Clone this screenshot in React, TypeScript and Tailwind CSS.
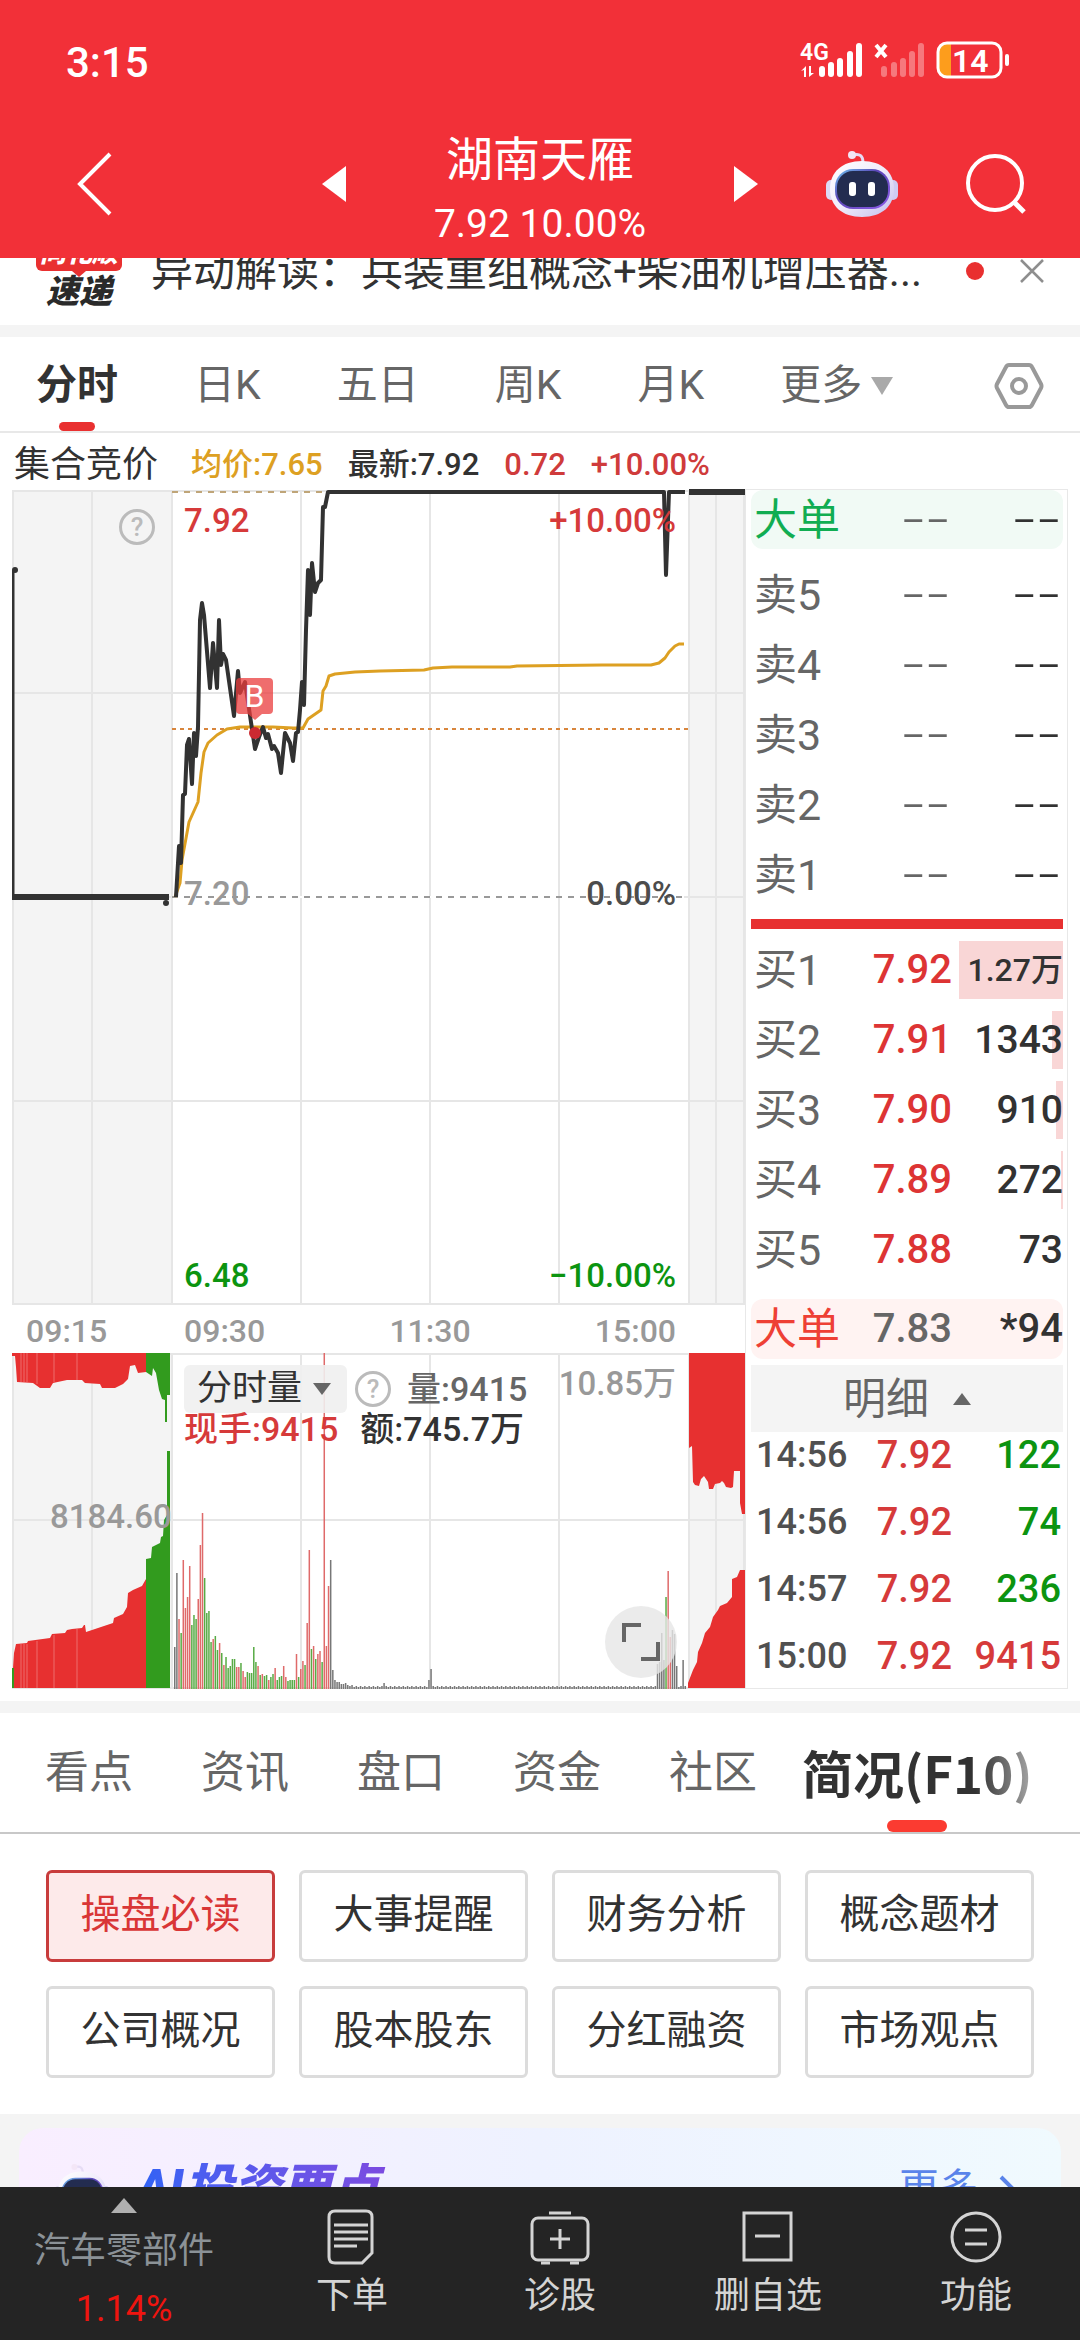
import { Fragment } from "react";

const minuteBars =
  "42k 116k 70r 56g 129r 81r 92r 123r 64g 74g 70g 90r 144r 176r 111g 76g 78g 47g 50r 53g 39g 46r 36g 24r 32g 21g 23g 30g 30g 22r 22r 26g 18r 12r 17g 16g 16g 42g 27g 23r 14g 15r 13g 14g 9r 12g 15g 21r 9g 12g 13g 23r 12r 8g 9g 9g 9g 35r 12g 20r 28r 24g 66r 139r 40g 43r 30g 35r 38r 27g 336r 43r 103r 129k 19k 9k 7k 7k 5k 5k 6k 4k 3k 4k".split(
    " "
  );

const lateBars: Record<number, string> = {
  98: "6k",
  119: "9k",
  120: "20k",
  226: "25k",
  227: "27k",
  228: "56k",
  229: "29k",
  230: "92g",
  231: "118r",
  232: "52r",
  233: "59k",
  234: "55k",
  235: "23k",
  238: "29k",
};

const barColors: Record<string, string> = {
  r: "#df6a6a",
  g: "#58ab45",
  k: "#777777",
};

const priceLine =
  "176,897 179,846 181,863 183,795 185,794 187,745 189,739 192,784 194,733 196,756 198,727 200,620 202,603 204,615 210,688 213,643 217,688 219,620 221,665 223,654 226,660 234,716 238,671 240,693 245,682 255,749 259,737 263,727 266,738 268,734 272,749 274,746 278,753 281,773 285,733 290,743 293,761 296,733 298,732 300,710 302,682 304,705 306,630 308,570 310,615 312,563 315,592 318,583 321,580 323,507 325,507 328,492 664,492 666,575 669,492 685,492";

const averageLine =
  "175,897 180,883 182,860 189,822 198,802 201,773 204,752 208,743 217,735 227,729 240,727 273,727 293,728 303,728 308,719 321,710 323,691 326,686 329,676 335,674 355,672 380,671 424,670 433,668 452,667 510,667 517,666 602,665 651,665 659,663 665,658 669,652 675,646 679,644 684,644";

const periods = ["日K", "五日", "周K", "月K"];
const sections = ["看点", "资讯", "盘口", "资金", "社区"];
const topics = [
  "操盘必读",
  "大事提醒",
  "财务分析",
  "概念题材",
  "公司概况",
  "股本股东",
  "分红融资",
  "市场观点",
];

const bids = [
  { label: "买1", price: "7.92", volume: "1.27万", depth: 94 },
  { label: "买2", price: "7.91", volume: "1343", depth: 10 },
  { label: "买3", price: "7.90", volume: "910", depth: 6 },
  { label: "买4", price: "7.89", volume: "272", depth: 2 },
  { label: "买5", price: "7.88", volume: "73", depth: 0 },
];

const ticks = [
  { time: "14:56", price: "7.92", volume: "122", up: false },
  { time: "14:56", price: "7.92", volume: "74", up: false },
  { time: "14:57", price: "7.92", volume: "236", up: false },
  { time: "15:00", price: "7.92", volume: "9415", up: true },
];

const Robot = ({ className }: { className: string }) => (
  <svg viewBox="0 0 72 66" className={className} aria-hidden="true">
    <defs>
      <linearGradient id="shell" x1="0" y1="0" x2="1" y2="1">
        <stop offset="0" stopColor="#ffffff" />
        <stop offset="0.5" stopColor="#f0ecfb" />
        <stop offset="1" stopColor="#c3bdec" />
      </linearGradient>
      <linearGradient id="rim" x1="0" y1="0" x2="1" y2="1">
        <stop offset="0" stopColor="#6fc8f2" />
        <stop offset="0.4" stopColor="#5b46b8" />
        <stop offset="1" stopColor="#8f5be8" />
      </linearGradient>
    </defs>
    <path d="M27 4c7-2 10 1 10 8" fill="none" stroke="#e6dcf5" strokeWidth="3" />
    <circle cx="26" cy="4" r="4" fill="#f3e6f6" />
    <rect x="0" y="29" width="10" height="20" rx="5" fill="#dcdaf5" />
    <rect x="62" y="29" width="10" height="20" rx="5" fill="#cfcbf2" />
    <path
      d="M36 10c20 0 32 11 32 28S56 66 36 66 4 55 4 38 16 10 36 10z"
      fill="url(#shell)"
    />
    <rect x="9" y="18" width="55" height="40" rx="18" fill="url(#rim)" />
    <rect x="11" y="20" width="51" height="36" rx="16" fill="#232c50" />
    <rect x="23" y="31" width="7" height="14" rx="3" fill="#fff" />
    <rect x="42" y="31" width="7" height="14" rx="3" fill="#fff" />
  </svg>
);

const StatusBar = () => (
  <div className="flex h-[120px] items-center justify-between pr-[70px] pl-[66px]">
    <span className="pt-1 text-[42px] font-medium">3:15</span>
    <svg
      viewBox="0 0 210 38"
      className="h-[38px] w-[210px] overflow-visible"
      role="img"
      aria-label="4G 14%"
    >
      <g fill="#fff">
        <text x="0" y="19" fontSize="23" fontWeight="600" fontFamily="Roboto">
          4G
        </text>
        <path d="M1 30l5-5v11H4v-7zM9 25v11l5-4h-3v-7z" />
        <rect x="19" y="25" width="6" height="11" rx="3" />
        <rect x="28" y="21" width="6" height="15" rx="3" />
        <rect x="37" y="17" width="6" height="19" rx="3" />
        <rect x="47" y="10" width="6" height="26" rx="3" />
        <rect x="56" y="2" width="6" height="34" rx="3" />
      </g>
      <path d="M76 4l10 12M86 4L76 16" stroke="#fff" strokeWidth="4" />
      <g fill="#fff" opacity="0.35">
        <rect x="81" y="25" width="6" height="11" rx="3" />
        <rect x="91" y="21" width="6" height="15" rx="3" />
        <rect x="100" y="17" width="6" height="19" rx="3" />
        <rect x="109" y="10" width="6" height="26" rx="3" />
        <rect x="118" y="2" width="6" height="34" rx="3" />
      </g>
      <path d="M151 3v32h-5q-7-1-7-8V11q0-7 7-8z" fill="#fd9d1c" />
      <rect x="138" y="2" width="63" height="34" rx="9" fill="none" stroke="#fff" strokeWidth="3" />
      <rect x="205" y="13" width="4" height="12" rx="2" fill="#fff" />
      <text x="152" y="31" fontSize="32" fontWeight="600" fontFamily="Roboto" fill="#fff">
        14
      </text>
    </svg>
  </div>
);

const Header = () => (
  <header className="shrink-0 bg-[#f23038] text-white">
    <StatusBar />
    <div className="grid h-[138px] grid-cols-[1fr_auto_1fr] items-center pb-[10px]">
      <button type="button" aria-label="返回" className="ml-[76px] w-9">
        <svg viewBox="0 0 36 64" className="h-16 w-9">
          <path d="M34 2L4 32l30 30" fill="none" stroke="#fff" strokeWidth="4" />
        </svg>
      </button>
      <div className="flex w-[436px] items-center justify-between">
        <button type="button" aria-label="上一只">
          <svg viewBox="0 0 24 36" className="h-9 w-6">
            <path d="M24 0v36L0 18z" fill="#fff" />
          </svg>
        </button>
        <div className="pt-4 text-center">
          <h1 className="text-[47px] leading-[48px]">湖南天雁</h1>
          <p className="mt-4 text-[39px] leading-[48px]">7.92 10.00%</p>
        </div>
        <button type="button" aria-label="下一只">
          <svg viewBox="0 0 24 36" className="h-9 w-6">
            <path d="M0 0v36l24-18z" fill="#fff" />
          </svg>
        </button>
      </div>
      <div className="flex items-center justify-end gap-[68px] pr-[54px]">
        <button type="button" aria-label="助手">
          <Robot className="h-[66px] w-[72px]" />
        </button>
        <button type="button" aria-label="搜索">
          <svg viewBox="0 0 60 60" className="h-[60px] w-[60px]">
            <circle cx="29" cy="29" r="27" fill="none" stroke="#fff" strokeWidth="4" />
            <path d="M48 48l10 10" stroke="#fff" strokeWidth="5" />
          </svg>
        </button>
      </div>
    </div>
  </header>
);

const NewsStrip = () => (
  <div className="h-[67px] shrink-0 overflow-hidden bg-white">
    <div className="-mt-[23px] flex h-[72px] items-center px-[36px]">
      <div className="flex w-[86px] flex-col items-center italic">
        <span className="h-[36px] w-full rounded-md bg-[#e93030] text-center text-[26px] leading-[36px] font-black text-white">
          同花顺
        </span>
        <svg viewBox="0 0 14 6" className="h-[6px] w-[14px]">
          <path d="M0 0h14L7 6z" fill="#e93030" />
        </svg>
        <span className="text-[33px] leading-[30px] font-black text-[#2a2a2a]">速递</span>
      </div>
      <p className="ml-[29px] flex-1 text-[42px] whitespace-nowrap text-[#323232]">
        异动解读：兵装重组概念+柴油机增压器...
      </p>
      <span className="h-[18px] w-[18px] rounded-full bg-[#e93030]" />
      <button type="button" aria-label="关闭" className="ml-[36px]">
        <svg viewBox="0 0 24 24" className="h-6 w-6">
          <path d="M1 1l22 22M23 1L1 23" stroke="#8e8e8e" strokeWidth="2.5" />
        </svg>
      </button>
    </div>
  </div>
);

const PeriodTabs = () => (
  <nav className="flex h-24 shrink-0 items-center gap-[76px] border-b-2 border-[#e8e8e8] bg-white px-[36px] pt-1 text-[41px] whitespace-nowrap text-[#666]">
    <button type="button" className="relative h-full font-bold text-[#323232]">
      分时
      <span className="absolute bottom-0 left-1/2 h-[9px] w-9 -translate-x-1/2 rounded-full bg-[#e93030]" />
    </button>
    {periods.map((period) => (
      <button key={period} type="button">
        {period}
      </button>
    ))}
    <button type="button" className="flex items-center gap-2">
      更多
      <svg viewBox="0 0 24 20" className="h-5 w-6">
        <path d="M1 1h22L12 19z" fill="#a9a9a9" />
      </svg>
    </button>
    <button type="button" aria-label="设置" className="ml-auto">
      <svg viewBox="0 0 50 46" className="h-[46px] w-[50px]" fill="none" stroke="#999">
        <path
          d="M15 2h20q2 0 3 2l9 17q1 2 0 4l-9 17q-1 2-3 2H15q-2 0-3-2L3 25q-1-2 0-4l9-17q1-2 3-2z"
          strokeWidth="4"
        />
        <circle cx="25" cy="23" r="7" strokeWidth="4" />
      </svg>
    </button>
  </nav>
);

const HelpIcon = () => (
  <span className="flex h-[36px] w-[36px] items-center justify-center rounded-full border-[3px] border-[#bbb] text-[26px] leading-none text-[#bbb]">
    ?
  </span>
);

const PriceChart = () => (
  <div className="relative text-[33px] leading-[40px] font-medium">
    <svg
      viewBox="12 489 733 817"
      preserveAspectRatio="none"
      className="block h-[817px] w-full"
      role="img"
      aria-label="分时走势"
    >
      <rect x="12" y="490" width="161" height="815" fill="#f4f4f4" />
      <rect x="689" y="490" width="56" height="815" fill="#f4f4f4" />
      <g stroke="#e6e6e6" strokeWidth="2">
        <path d="M12 491h733M12 693h733M12 897h733M12 1101h733M12 1304h733" />
        <path d="M13 490v815M92 490v815M172 490v815M301 490v815M430 490v815M559 490v815M689 490v815M716 490v815M744 490v815" />
      </g>
      <path d="M172 492h155" stroke="#bfa578" strokeWidth="2" strokeDasharray="6 6" />
      <path d="M172 897h512" stroke="#fff" strokeWidth="2" />
      <path d="M172 897h512" stroke="#999" strokeWidth="2" strokeDasharray="6 6" />
      <path d="M172 729h517" stroke="#d8853c" strokeWidth="2" strokeDasharray="4 4" />
      <polyline points={averageLine} fill="none" stroke="#dda022" strokeWidth="3" strokeLinejoin="round" />
      <polyline points={priceLine} fill="none" stroke="#323232" strokeWidth="4" strokeLinejoin="round" />
      <path d="M13 570v327" stroke="#323232" strokeWidth="3" />
      <path d="M12 897h157M689 492h56" stroke="#323232" strokeWidth="6" />
      <g fill="#323232">
        <circle cx="15" cy="570" r="3" />
        <circle cx="166" cy="903" r="3" />
      </g>
      <circle cx="255" cy="733" r="6" fill="#cb2a31" />
      <path
        d="M240 678h29q4 0 4 4v28q0 4-4 4h-7l-7 6-7-6h-8q-4 0-4-4v-28q0-4 4-4z"
        fill="#ea3c3c"
        opacity="0.75"
      />
    </svg>
    <span className="absolute top-[189px] left-[224px] w-[37px] text-center text-[32px] leading-[36px] font-normal text-white">
      B
    </span>
    <span className="absolute top-[20px] left-[107px]">
      <HelpIcon />
    </span>
    <span className="absolute top-[12px] left-[172px] text-[#d63a3a]">7.92</span>
    <span className="absolute top-[12px] right-[69px] text-[#d63a3a]">+10.00%</span>
    <span className="absolute top-[385px] left-[172px] text-[#999]">7.20</span>
    <span className="absolute top-[385px] right-[69px] text-[#4c4c4c]">0.00%</span>
    <span className="absolute top-[767px] left-[172px] text-[#0c9410]">6.48</span>
    <span className="absolute top-[767px] right-[69px] text-[#0c9410]">−10.00%</span>
  </div>
);

const VolumeChart = () => (
  <div className="relative text-[33px] leading-[40px] font-medium">
    <svg
      viewBox="12 1352 733 337"
      preserveAspectRatio="none"
      className="block h-[337px] w-full"
      role="img"
      aria-label="分时量"
    >
      <rect x="12" y="1353" width="161" height="336" fill="#f4f4f4" />
      <rect x="689" y="1353" width="56" height="336" fill="#f4f4f4" />
      <g stroke="#e6e6e6" strokeWidth="2">
        <path d="M12 1354h733M12 1520h733M12 1688h733" />
        <path d="M13 1353v336M92 1353v336M172 1353v336M301 1353v336M430 1353v336M559 1353v336M689 1353v336M716 1353v336M744 1353v336" />
      </g>
      <g fill="#e73030">
        <path d="M12 1353v3h3l1 11 1 15 16 1 7 5h10l3-5 14-3h15l3 3 15 1 2 4h13l8-4 5-5 2-13 5-1 3 8 8-1v-19z" />
        <path d="M12 1688l1-20 1-15 2-9 11-1 1-2 22-3 2-4 13-1 2-3 5-1 10-1 2-3 1 0 1 7 27-9 1-5 9-4 4-7 1-14 5-3 9-4 4-7v109z" />
        <path d="M689 1353v95l3-2 1 36 2 3 4 1 2-7 3-3 4 6 1 7h4l2-5 5-1 2-2 2 2 2 4 5 1 2-1 1-16h6v32l2 11h3V1353z" />
        <path d="M688 1688v-5l5-13 4-8 1-10 4-9 3-10 5-6 3-10 5-7 2-4 7-3 5-6v-18l5-2 3-7h5v118z" />
      </g>
      <g fill="#329b1e">
        <path d="M146 1353v19l6 4 1-8 3 5 3 17 3 9 3 1v22h2v-27h3v-42z" />
        <path d="M146 1688v-129l5-1 1-11 8-4 1-6 2-1 1-16 3-5v-64h3v237z" />
        <path d="M12 1668h2v20h-2z" />
      </g>
      <g stroke="#fff" strokeOpacity="0.3">
        <path d="M21 1353v29M24 1353v29M27 1353v29M37 1353v31M54 1353v29M77 1353v27" />
        <path d="M21 1644v44M24 1644v44M27 1644v44M37 1641v47M54 1635v53M77 1629v59" />
      </g>
      {Array.from({ length: 240 }, (_, i) => {
        const bar = minuteBars[i] ?? lateBars[i] ?? `${2 + ((i * 7) % 2)}k`;
        const height = parseInt(bar);
        return (
          <rect
            key={i}
            x={174 + i * 2.136}
            y={1689 - height}
            width="1.5"
            height={height}
            fill={barColors[bar.slice(-1)]}
          />
        );
      })}
    </svg>
    <div className="absolute top-[13px] left-[172px] flex items-center">
      <button
        type="button"
        className="flex h-12 items-center gap-[10px] rounded-md bg-[#f0f0f0]/90 pr-[15px] pl-[13px] text-[35px] font-normal text-[#323232]"
      >
        分时量
        <svg viewBox="0 0 20 14" className="h-[14px] w-5">
          <path d="M1 1h18l-9 12z" fill="#666" />
        </svg>
      </button>
      <span className="ml-2">
        <HelpIcon />
      </span>
      <span className="ml-[16px] text-[34px] text-[#666]">量:9415</span>
    </div>
    <span className="absolute top-[12px] right-[69px] text-[#999]">10.85万</span>
    <div className="absolute top-[57px] left-[172px] flex gap-[22px] text-[34px]">
      <span className="text-[#d63a3a]">现手:9415</span>
      <span className="text-[#323232]">额:745.7万</span>
    </div>
    <span className="absolute top-[145px] left-[38px] text-[#999]">8184.60</span>
    <button
      type="button"
      aria-label="全屏"
      className="absolute right-[68px] bottom-[11px] flex h-[72px] w-[72px] items-center justify-center rounded-full bg-[#e6e6e6]/80"
    >
      <svg viewBox="0 0 38 38" className="h-[38px] w-[38px]" fill="none" stroke="#666" strokeWidth="4">
        <path d="M2 19V2h17M36 19v17H19" />
      </svg>
    </button>
  </div>
);

const Dashes = ({ className }: { className: string }) => (
  <td
    className={`pr-[2px] pb-2 text-right font-['DejaVu_Sans'] text-[68px] leading-[40px] font-extralight ${className}`}
  >
    --
  </td>
);

const Columns = () => (
  <colgroup>
    <col className="w-[100px]" />
    <col className="w-[101px]" />
    <col />
  </colgroup>
);

const OrderBook = () => (
  <div className="w-[323px] border border-[#e8e8e8] pr-[4px] pl-[5px] text-[43px] text-[#666]">
    <div className="rounded-xl bg-[#f1faf5]">
      <table className="w-full table-fixed">
        <Columns />
        <tbody>
          <tr className="h-[59px] leading-[56px]">
            <th className="pl-[3px] text-left font-normal whitespace-nowrap text-[#11ad52]">大单</th>
            <Dashes className="text-[#666]" />
            <Dashes className="text-[#323232]" />
          </tr>
        </tbody>
      </table>
    </div>
    <table className="mt-[11px] w-full table-fixed">
      <Columns />
      <tbody>
        {["卖5", "卖4", "卖3", "卖2", "卖1"].map((label) => (
          <tr key={label} className="h-[70px] leading-[60px]">
            <th className="pl-[3px] text-left font-normal">{label}</th>
            <Dashes className="text-[#666]" />
            <Dashes className="text-[#323232]" />
          </tr>
        ))}
      </tbody>
    </table>
    <div className="mt-[9px] mb-[6px] h-[10px] bg-[#e73030]" />
    <table className="w-full table-fixed">
      <Columns />
      <tbody>
        {bids.map((bid) => (
          <tr key={bid.label} className="h-[70px] leading-[60px]">
            <th className="pl-[3px] text-left font-normal">{bid.label}</th>
            <td className="text-right text-[40px] font-medium text-[#dd3434]">{bid.price}</td>
            <td
              className={`relative text-right font-medium text-[#323232] ${
                bid.volume.includes("万") ? "text-[32px]" : "text-[39px]"
              }`}
            >
              <span
                className="absolute inset-y-[6px] right-0 bg-[#f9d6d6]"
                style={{ width: `${bid.depth}%` }}
              />
              <span className="relative">{bid.volume}</span>
            </td>
          </tr>
        ))}
      </tbody>
    </table>
    <div className="mt-[14px] rounded-xl bg-[#fff3f2]">
      <table className="w-full table-fixed">
        <Columns />
        <tbody>
          <tr className="h-[60px] leading-[56px]">
            <th className="pl-[3px] text-left font-normal whitespace-nowrap text-[#ee4035]">大单</th>
            <td className="text-right text-[40px] font-medium">7.83</td>
            <td className="text-right text-[40px] font-medium text-[#323232]">*94</td>
          </tr>
        </tbody>
      </table>
    </div>
    <button
      type="button"
      className="mt-[6px] flex h-[67px] w-full items-center justify-center gap-6 bg-[#f4f4f4] leading-[60px]"
    >
      明细
      <svg viewBox="0 0 18 12" className="h-3 w-[18px]">
        <path d="M9 0l9 12H0z" fill="#666" />
      </svg>
    </button>
    <table className="w-full table-fixed text-[38px] font-medium">
      <Columns />
      <tbody>
        {ticks.map((tick, i) => (
          <tr key={i} className="h-[67px] align-top leading-[46px]">
            <td className="pl-[5px] text-[36px] text-[#505050]">{tick.time}</td>
            <td className="text-right text-[#d63a3a]">{tick.price}</td>
            <td className={`pr-[2px] text-right ${tick.up ? "text-[#d63a3a]" : "text-[#0c9410]"}`}>
              {tick.volume}
            </td>
          </tr>
        ))}
      </tbody>
    </table>
  </div>
);

const Quotes = () => (
  <section className="h-[1268px] shrink-0 bg-white px-[12px]">
    <div className="flex h-[56px] items-center gap-[25px] pt-2 text-[31px] font-medium">
      <span className="mr-[8px] pl-[2px] text-[36px] font-normal text-[#323232]">集合竞价</span>
      <span className="text-[#dda022]">均价:7.65</span>
      <span className="text-[#323232]">最新:7.92</span>
      <span className="text-[#cf3b3b]">0.72</span>
      <span className="text-[#cf3b3b]">+10.00%</span>
    </div>
    <div className="flex h-[1200px]">
      <div className="min-w-0 flex-1">
        <PriceChart />
        <div className="flex h-[46px] items-center pt-1 pr-[69px] pl-[14px] text-[32px] font-medium text-[#999]">
          <span className="w-[158px]">09:15</span>
          <div className="flex flex-1 justify-between">
            <span>09:30</span>
            <span>11:30</span>
            <span>15:00</span>
          </div>
        </div>
        <VolumeChart />
      </div>
      <OrderBook />
    </div>
  </section>
);

const SectionTabs = () => (
  <nav className="flex h-[121px] shrink-0 items-center border-b-2 border-[#c8c8c8] bg-white pl-[45px] text-[44px] whitespace-nowrap text-[#666]">
    <div className="flex gap-[68px]">
      {sections.map((section) => (
        <button key={section} type="button">
          {section}
        </button>
      ))}
    </div>
    <button
      type="button"
      className="relative ml-[45px] h-full font-['Noto_Sans_CJK_SC',sans-serif] text-[51px] font-bold"
    >
      <span className="bg-gradient-to-r from-[#323232] from-75% to-[#aaa] bg-clip-text text-transparent">
        简况(F10)
      </span>
      <span className="absolute bottom-0 left-1/2 h-3 w-[60px] -translate-x-1/2 rounded-full bg-[#fb3b31]" />
    </button>
  </nav>
);

const Topics = () => (
  <div className="grid shrink-0 grid-cols-4 gap-6 bg-white px-[46px] pt-[36px] pb-[36px] text-[40px] text-[#323232]">
    {topics.map((topic, i) => (
      <button
        key={topic}
        type="button"
        className={`h-[92px] rounded-md border-[3px] pb-[2px] ${
          i === 0 ? "border-[#c83c3c] bg-[#fdeaea] text-[#d93636]" : "border-[#dcdcdc]"
        }`}
      >
        {topic}
      </button>
    ))}
  </div>
);

const AiCard = () => (
  <div className="mx-[19px] mt-[14px] shrink-0 rounded-t-3xl bg-gradient-to-r from-[#f9eeff] via-[#eef2ff] to-[#f0fafe]">
    <div className="flex h-[122px] items-center pr-[46px] pl-[35px]">
      <Robot className="h-[50px] w-[56px]" />
      <h2 className="ml-[27px] bg-gradient-to-r from-[#2f63f5] to-[#7b4ae0] bg-clip-text pr-2 text-[49px] font-black text-transparent italic">
        AI投资要点
      </h2>
      <a href="#more" className="ml-auto flex items-center gap-5 text-[40px] text-[#5a84ea]">
        更多
        <svg viewBox="0 0 16 28" className="h-7 w-4">
          <path d="M2 2l12 12L2 26" fill="none" stroke="#5a84ea" strokeWidth="4" />
        </svg>
      </a>
    </div>
  </div>
);

const actions = [
  {
    label: "下单",
    icon: (
      <Fragment>
        <path d="M10 2h31q6 0 6 6v36L37 54H10q-6 0-6-6V8q0-6 6-6z" />
        <path d="M9 16h34M9 23h34M9 30h34M9 37h23" />
      </Fragment>
    ),
  },
  {
    label: "诊股",
    icon: (
      <Fragment>
        <path d="M16 4h22M27 20v20M17 30h20M8 54h9M37 54h9" />
        <rect x="-1" y="9" width="56" height="42" rx="6" />
      </Fragment>
    ),
  },
  {
    label: "删自选",
    icon: (
      <Fragment>
        <rect x="3" y="4" width="47" height="47" />
        <path d="M14 27h25" />
      </Fragment>
    ),
  },
  {
    label: "功能",
    icon: (
      <Fragment>
        <circle cx="27" cy="28" r="24" />
        <path d="M16 21h22M16 35h22" />
      </Fragment>
    ),
  },
];

const BottomBar = () => (
  <footer className="flex h-[153px] shrink-0 bg-[#242424] text-[36px] text-[#d4d4d4]">
    <button
      type="button"
      className="flex w-[248px] flex-col items-center justify-start pt-[11px] text-[#8b9297]"
    >
      <svg viewBox="0 0 26 15" className="h-[15px] w-[26px] shrink-0">
        <path d="M13 0l13 15H0z" fill="#b0b0b0" />
      </svg>
      <span className="mt-[10px] leading-[56px]">汽车零部件</span>
      <span className="leading-[60px] text-[#f0140f]">1.14%</span>
    </button>
    {actions.map(({ label, icon }) => (
      <button
        key={label}
        type="button"
        className="flex flex-1 flex-col items-center justify-start pt-[22px]"
      >
        <svg
          viewBox="0 0 54 56"
          className="h-14 w-[54px] shrink-0 overflow-visible"
          fill="none"
          stroke="#d4d4d4"
          strokeWidth="3"
        >
          {icon}
        </svg>
        <span className="mt-[3px] leading-[56px]">{label}</span>
      </button>
    ))}
  </footer>
);

const App = () => {
  return (
    <div className="flex h-screen flex-col bg-[#f4f4f4] font-[Roboto,'Noto_Sans_CJK_SC',sans-serif]">
      <Header />
      <main className="flex min-h-0 flex-1 flex-col overflow-hidden">
        <NewsStrip />
        <div className="h-3 shrink-0" />
        <PeriodTabs />
        <Quotes />
        <div className="h-3 shrink-0" />
        <SectionTabs />
        <Topics />
        <AiCard />
      </main>
      <BottomBar />
    </div>
  );
};

export default App;
